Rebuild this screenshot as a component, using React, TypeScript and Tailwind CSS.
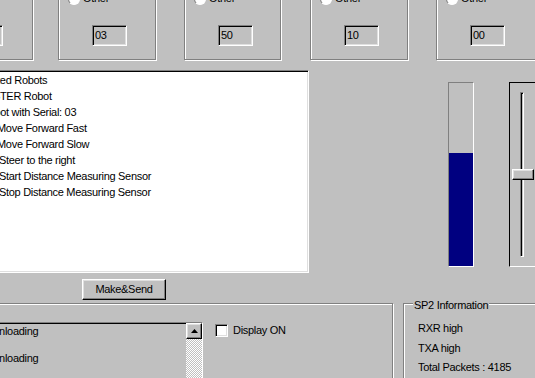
import React from "react";

const etched = "border border-[#808080] shadow-[inset_1px_1px_0_#fff,1px_1px_0_#fff]";
const sunken =
  "border border-t-[#808080] border-l-[#808080] border-r-white border-b-white shadow-[inset_1px_1px_0_#000,inset_-1px_-1px_0_#dfdfdf]";
const raised =
  "border border-t-white border-l-white border-r-black border-b-black shadow-[inset_-1px_-1px_0_#808080,inset_1px_1px_0_#dfdfdf]";

function ValueBox({ value, className }: { value: string; className: string }) {
  return (
    <div className={`shrink-0 h-full flex flex-col pl-[9px] pt-[12px] ${etched} ${className}`}>
      <div className="flex items-center h-[13px]">
        <div className="w-[12px] h-[12px] rounded-full bg-white border border-t-[#808080] border-l-[#808080] border-r-white border-b-white" />
        <span className="ml-[3px]">Other</span>
      </div>
      <div className={`mt-[20px] ml-[24px] w-[35px] h-[21px] pl-[2px] leading-[19px] ${sunken}`}>
        {value}
      </div>
    </div>
  );
}

const treeLines = [
  { text: "Connected Robots", indent: "ml-[-20px]" },
  { text: "MASTER Robot", indent: "ml-[-4px]" },
  { text: "Robot with Serial: 03", indent: "ml-[0px]" },
  { text: "Move Forward Fast", indent: "ml-[16px]" },
  { text: "Move Forward Slow", indent: "ml-[16px]" },
  { text: "Steer to the right", indent: "ml-[18px]" },
  { text: "Start Distance Measuring Sensor", indent: "ml-[18px]" },
  { text: "Stop Distance Measuring Sensor", indent: "ml-[18px]" },
];

export default function App() {
  return (
    <div className="w-[535px] h-[378px] overflow-hidden bg-[#c0c0c0] text-black text-[11px] tracking-[-0.3px] font-['Liberation_Sans',Arial,sans-serif] flex flex-col">
      {/* mode boxes */}
      <div className="flex h-[81px] mt-[-21px] shrink-0">
        <ValueBox className="ml-[-66px] w-[99px]" value="" />
        <ValueBox className="ml-[25px] w-[98px]" value="03" />
        <ValueBox className="ml-[28px] w-[97px]" value="50" />
        <ValueBox className="ml-[29px] w-[98px]" value="10" />
        <ValueBox className="ml-[28px] w-[110px]" value="00" />
      </div>

      {/* tree + meters */}
      <div className="flex mt-[10px] shrink-0">
        <div className="flex flex-col ml-[-20px] w-[329px] shrink-0">
          <div className={`h-[203px] bg-white overflow-hidden pt-[1px] ${sunken}`}>
            {treeLines.map((l) => (
              <div key={l.text} className={`h-[16px] leading-[16px] whitespace-nowrap ${l.indent}`}>
                {l.text}
              </div>
            ))}
          </div>
          <button className={`mt-[6px] ml-[102px] w-[84px] h-[21px] bg-[#c0c0c0] ${raised}`}>Make&amp;Send</button>
        </div>

        <div className="ml-[139px] mt-[12px] w-[26px] h-[185px] shrink-0 flex flex-col justify-end border border-t-[#808080] border-l-[#808080] border-r-white border-b-white">
          <div className="h-[113px] bg-[#000080]" />
        </div>

        <div className="ml-[35px] mt-[12px] w-[30px] h-[185px] shrink-0 flex flex-col items-start pt-[9px] border border-t-black border-l-black border-r-white border-b-white">
          <div className="ml-[10px] w-[4px] h-[165px] border border-t-[#808080] border-l-[#808080] border-r-white border-b-white shadow-[inset_1px_1px_0_#000]" />
          <div className={`ml-[2px] mt-[-88px] w-[22px] h-[11px] bg-[#c0c0c0] ${raised}`} />
        </div>
      </div>

      {/* bottom groups */}
      <div className="flex mt-[3px] shrink-0 h-[100px]">
        <div className={`ml-[-10px] w-[403px] h-full shrink-0 flex items-start ${etched}`}>
          <div className={`ml-[3px] mt-[18px] w-[209px] h-[90px] flex ${sunken}`}>
            <div className="flex-1 flex flex-col gap-[14px] pt-[2px] overflow-hidden">
              <div className="h-[13px] leading-[13px] ml-[-17px] whitespace-nowrap">Downloading</div>
              <div className="h-[13px] leading-[13px] ml-[-17px] whitespace-nowrap">Downloading</div>
            </div>
            <div className="w-[16px] flex flex-col bg-[repeating-conic-gradient(#fff_0_25%,#c0c0c0_0_50%)] bg-[length:2px_2px]">
              <div className={`w-[16px] h-[16px] bg-[#c0c0c0] flex items-center justify-center ${raised}`}>
                <svg width="7" height="4" viewBox="0 0 7 4">
                  <path d="M3.5 0 L7 4 L0 4 Z" fill="#000" />
                </svg>
              </div>
            </div>
          </div>
          <div className="ml-[12px] mt-[18px] flex items-center gap-[5px]">
            <div className={`w-[13px] h-[13px] bg-white ${sunken}`} />
            <span>Display ON</span>
          </div>
        </div>

        <div className={`relative ml-[10px] w-[150px] h-full shrink-0 pl-[14px] pt-[15px] ${etched}`}>
          <span className="absolute top-[-7px] left-[9px] px-[1px] bg-[#c0c0c0]">SP2 Information</span>
          <div className="leading-[19.5px]">RXR high</div>
          <div className="leading-[19.5px]">TXA high</div>
          <div className="leading-[19.5px]">Total Packets : 4185</div>
        </div>
      </div>
    </div>
  );
}
